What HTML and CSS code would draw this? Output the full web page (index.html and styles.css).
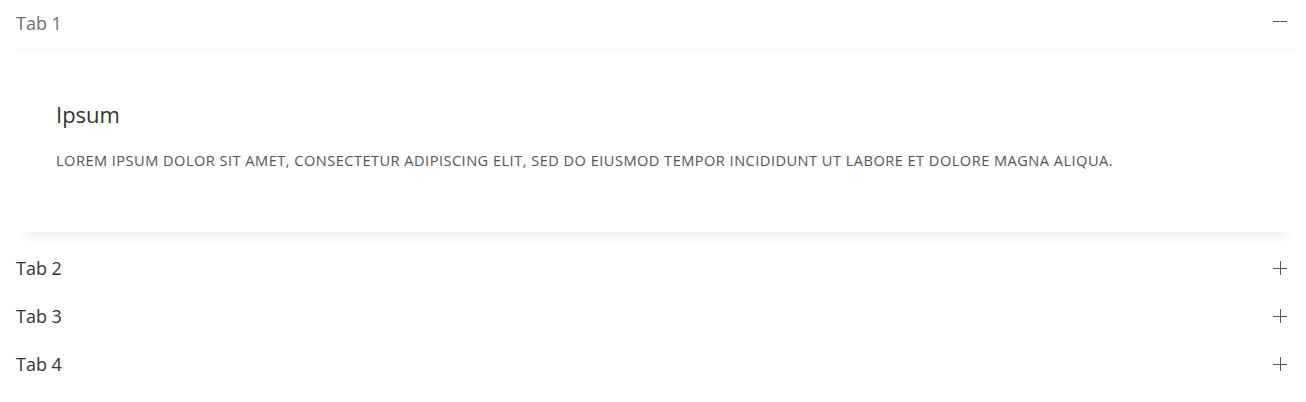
FILE: index.html
```html
<!DOCTYPE html>
<html>
<head>
<meta charset="utf-8">
<link rel="stylesheet" href="styles.css">
</head>
<body>
<div class="accordion">
  <div class="item open">
    <div class="header">
      <span class="title">Tab 1</span>
      <svg class="icon minus" width="14" height="14" viewBox="0 0 14 14"><path d="M0 7.5H14" stroke="#555" stroke-width="1"/></svg>
    </div>
    <div class="panel">
      <h2 class="heading">Ipsum</h2>
      <p class="text">LOREM IPSUM DOLOR SIT AMET, CONSECTETUR ADIPISCING ELIT, SED DO EIUSMOD TEMPOR INCIDIDUNT UT LABORE ET DOLORE MAGNA ALIQUA.</p>
    </div>
  </div>
  <div class="item">
    <div class="header">
      <span class="title">Tab 2</span>
      <svg class="icon" width="14" height="14" viewBox="0 0 14 14"><path d="M0 7.5H14M7.5 0V14" stroke="#555" stroke-width="1"/></svg>
    </div>
  </div>
  <div class="item">
    <div class="header">
      <span class="title">Tab 3</span>
      <svg class="icon" width="14" height="14" viewBox="0 0 14 14"><path d="M0 7.5H14M7.5 0V14" stroke="#555" stroke-width="1"/></svg>
    </div>
  </div>
  <div class="item">
    <div class="header">
      <span class="title">Tab 4</span>
      <svg class="icon" width="14" height="14" viewBox="0 0 14 14"><path d="M0 7.5H14M7.5 0V14" stroke="#555" stroke-width="1"/></svg>
    </div>
  </div>
</div>
</body>
</html>
```
FILE: styles.css
```css
html, body {
  margin: 0;
  padding: 0;
  background: #fff;
}
body {
  font-family: "Open Sans", "Noto Sans", sans-serif;
  padding: 0 11px 0 16px;
}
.accordion {
  display: flex;
  flex-direction: column;
}
.header {
  height: 48px;
  display: flex;
  align-items: center;
  justify-content: space-between;
  padding-right: 8px;
}
.item.open .header {
  height: 46px;
}
.title {
  font-size: 18px;
  color: #333;
}
.item.open .title {
  color: #6e6e6e;
}
.icon {
  display: block;
}
.icon.minus {
  margin-top: -4px;
}
.panel {
  margin-top: 2px;
  margin-bottom: 12px;
  padding: 46px 40px 62px 40px;
  background: linear-gradient(to bottom, #f8f8f8 0, #fcfcfc 4px, #fff 9px);
  box-shadow: 0 12px 10px -8px rgba(0, 0, 0, 0.07);
}
.heading {
  margin: 0;
  font-size: 22px;
  font-weight: 400;
  color: #333;
  line-height: 40px;
}
.text {
  margin: 16px 0 0 0;
  font-size: 14.6px;
  letter-spacing: 0.47px;
  color: #555;
  line-height: 20px;
}
```
